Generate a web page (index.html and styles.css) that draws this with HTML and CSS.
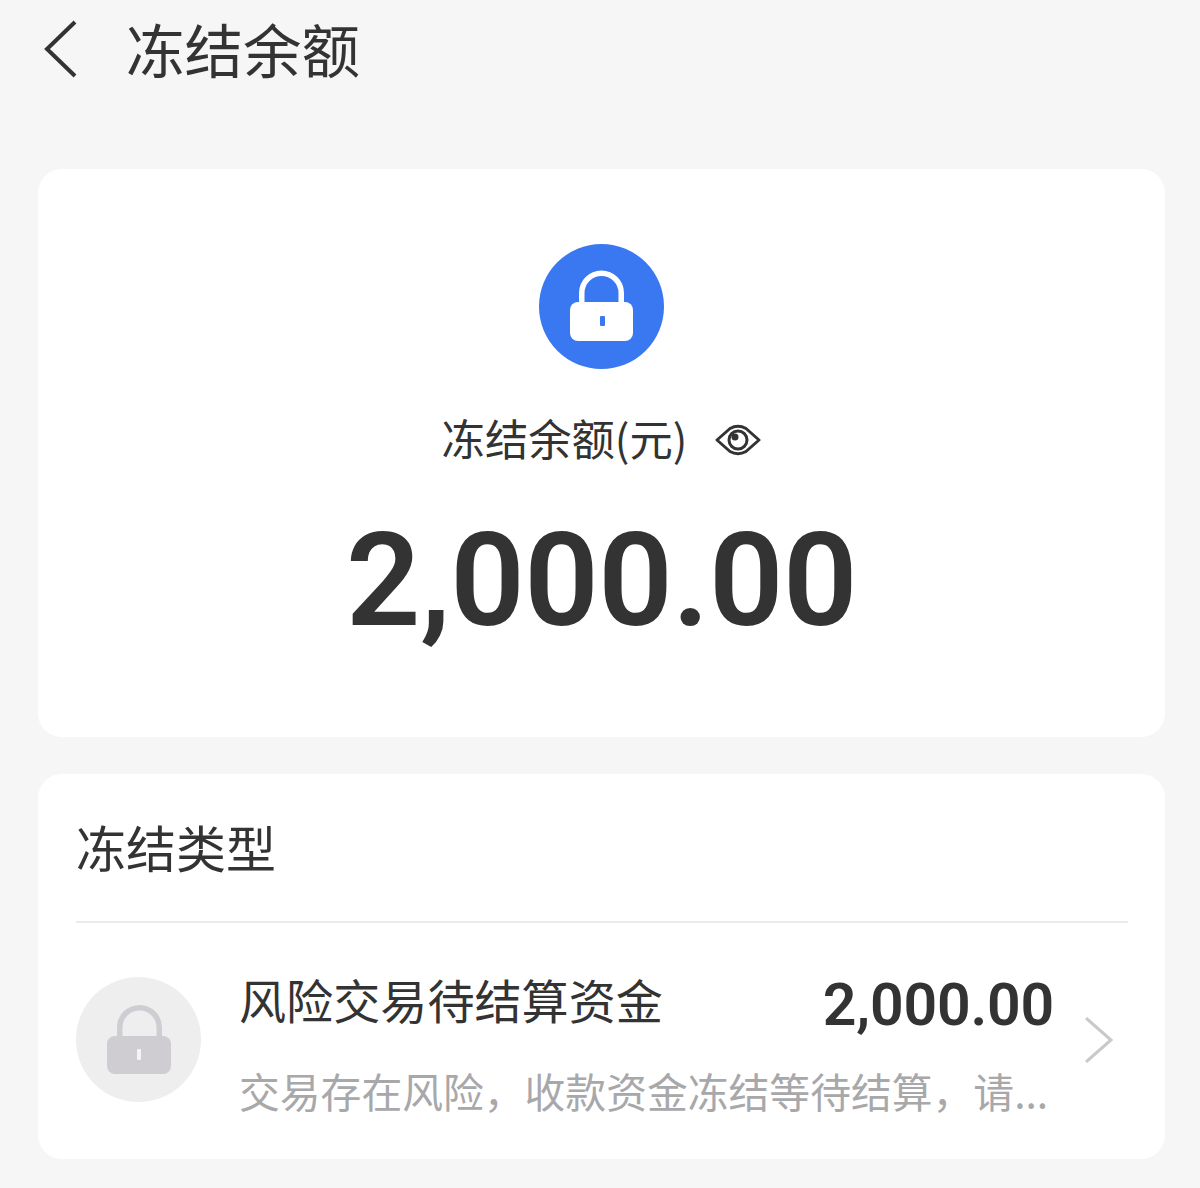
FILE: index.html
```html
<!DOCTYPE html>
<html lang="zh">
<head>
<meta charset="utf-8">
<title>冻结余额</title>
<link rel="stylesheet" href="styles.css">
</head>
<body>
<header class="nav">
  <svg class="back" width="36" height="60" viewBox="0 0 36 60"><path d="M33 3 L5 30 L33 57" fill="none" stroke="#333" stroke-width="4"/></svg>
  <h1 class="nav-title">冻结余额</h1>
</header>
<main class="content">
  <section class="card summary">
    <svg class="lock-badge" width="125" height="125" viewBox="0 0 125 125">
      <circle cx="62.5" cy="62.5" r="62.5" fill="#3a78f2"/>
      <path d="M42.750 60 V49 A19.750 19.750 0 0 1 82.250 49 V60" fill="none" stroke="#fff" stroke-width="5.500"/>
      <rect x="31" y="58" width="63" height="39" rx="8" fill="#fff"/>
      <rect x="61" y="72" width="5" height="10" rx="1" fill="#3a78f2"/>
    </svg>
    <div class="label-row">
      <span class="label">冻结余额(元)</span>
      <svg class="eye" width="46" height="36" viewBox="0 0 46 36">
        <path d="M2 18 L15 6.500 Q23 2 31 6.500 L44 18 L31 29.500 Q23 34 15 29.500 Z" fill="none" stroke="#333" stroke-width="3" stroke-linejoin="round"/>
        <circle cx="23" cy="18" r="9" fill="none" stroke="#333" stroke-width="3"/>
        <circle cx="20" cy="15" r="3.500" fill="#333"/>
      </svg>
    </div>
    <div class="amount">2,000.00</div>
  </section>
  <section class="card types">
    <h2 class="types-title">冻结类型</h2>
    <div class="row">
      <svg class="lock-muted" width="125" height="125" viewBox="0 0 125 125">
        <circle cx="62.5" cy="62.5" r="62.5" fill="#eeeeef"/>
        <path d="M43.750 62 V50.500 A19.750 19.750 0 0 1 83.250 50.500 V62" fill="none" stroke="#cfcdd2" stroke-width="5.500"/>
        <rect x="31" y="59" width="64" height="38" rx="8" fill="#cfcdd2"/>
        <rect x="61" y="72" width="4" height="11" rx="1" fill="#f4f4f5"/>
      </svg>
      <div class="row-body">
        <div class="row-top">
          <span class="row-name">风险交易待结算资金</span>
          <span class="row-amount">2,000.00</span>
        </div>
        <div class="row-desc">交易存在风险，收款资金冻结等待结算，请...</div>
      </div>
      <svg class="chevron" width="30" height="46" viewBox="0 0 30 46"><path d="M2 1 L27 23 L2 45" fill="none" stroke="#c9c9cc" stroke-width="3"/></svg>
    </div>
  </section>
</main>
</body>
</html>
```

FILE: styles.css
```css
* { box-sizing: border-box; }
html, body { margin: 0; padding: 0; }
body {
  width: 1200px;
  height: 1188px;
  overflow: hidden;
  background: #f6f6f6;
  color: #333;
  font-family: "Noto Sans CJK SC", "Noto Sans", sans-serif;
}
h1, h2 { margin: 0; font-weight: 400; }
.nav {
  height: 169px;
  padding: 19px 0 0 42px;
  display: flex;
  align-items: flex-start;
}
.back { flex: none; }
.nav-title {
  margin: -1px 0 0 48px;
  font-size: 58.5px;
  line-height: 60px;
}
.content {
  padding: 0 35px 0 38px;
  display: flex;
  flex-direction: column;
  gap: 37px;
}
.card { background: #fff; border-radius: 24px; }
.summary {
  height: 568px;
  padding-top: 75px;
  display: flex;
  flex-direction: column;
  align-items: center;
}
.lock-badge { flex: none; }
.label-row {
  margin-top: 35px;
  height: 66px;
  display: flex;
  align-items: center;
  gap: 28px;
  margin-left: 0;
}
.label { font-size: 43.3px; line-height: 66px; }
.eye { flex: none; margin-top: 6px; }
.amount {
  margin-top: 36px;
  font-family: Roboto, sans-serif;
  font-weight: 600;
  font-size: 130.5px;
  line-height: 150px;
  letter-spacing: -0.5px;
}
.types {
  height: 385px;
  padding: 0 37px 0 38px;
}
.types-title {
  height: 149px;
  border-bottom: 2px solid #ebebeb;
  font-size: 50px;
  line-height: 144px;
}
.row {
  margin-top: 54px;
  display: flex;
  align-items: flex-start;
}
.lock-muted { flex: none; }
.row-body {
  margin-left: 38px;
  width: 815px;
  margin-top: -13px;
}
.row-top {
  display: flex;
  justify-content: space-between;
  align-items: center;
  height: 70px;
}
.row-name { font-size: 47.1px; line-height: 70px; }
.row-amount {
  font-family: Roboto, sans-serif;
  font-weight: 600;
  font-size: 59px;
  line-height: 70px;
  letter-spacing: -0.2px;
  position: relative;
  top: 6px;
}
.row-desc {
  margin-top: 27px;
  font-size: 40.8px;
  line-height: 60px;
  color: #a8a8aa;
  white-space: nowrap;
}
.chevron { margin: 40px 0 0 30px; flex: none; }
```
